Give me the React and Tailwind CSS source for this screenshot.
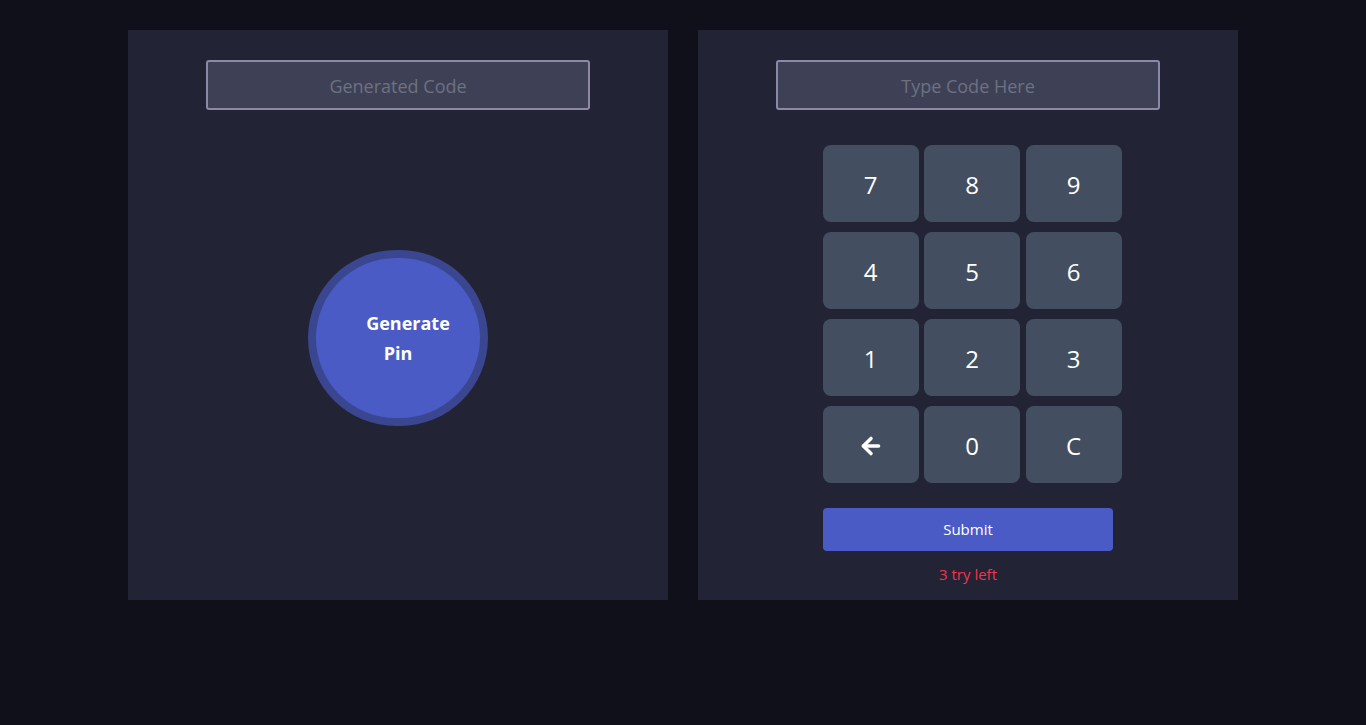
import { ArrowLeft } from 'lucide-react';

const keys = ['7', '8', '9', '4', '5', '6', '1', '2', '3', 'back', '0', 'C'];

export default function App() {
  return (
    <div className="min-h-[725px] w-full bg-[#10101a] pt-[30px] font-['Open_Sans','Noto_Sans',sans-serif]">
      <div className="mx-auto flex w-[1110px] gap-[30px]">
        {/* generator */}
        <div className="flex h-[570px] w-[540px] flex-col items-center bg-[#222335] pt-[30px]">
          <input
            readOnly
            placeholder="Generated Code"
            className="h-[50px] w-[384px] rounded-[3px] border-2 border-[#8b89a6] bg-[#3e4156] pt-[2px] text-center text-[18px] text-white outline-none placeholder:text-[#6d7181]"
          />
          <button className="mt-[140px] flex h-[176px] w-[180px] items-center justify-center rounded-full bg-[#3b4690]">
            <span className="flex h-[160px] w-[164px] flex-col items-center justify-center rounded-full bg-[#4a5bc5] text-[18px] font-bold leading-[30px] text-white">
              <span className="pl-[20px]">Generate</span>
              <span>Pin</span>
            </span>
          </button>
        </div>

        {/* keypad */}
        <div className="flex h-[570px] w-[540px] flex-col items-center bg-[#222335] pt-[30px]">
          <input
            readOnly
            placeholder="Type Code Here"
            className="h-[50px] w-[384px] rounded-[3px] border-2 border-[#8b89a6] bg-[#3e4156] pt-[2px] text-center text-[18px] text-white outline-none placeholder:text-[#6d7181]"
          />
          <div className="ml-[8px] mt-[35px] grid grid-cols-[96px_96px_96px] gap-x-[5.5px] gap-y-[10px]">
            {keys.map((k) => (
              <button
                key={k}
                className="flex h-[77px] items-center justify-center rounded-[8px] bg-[#434f60] pt-[2px] text-[24px] text-white"
              >
                {k === 'back' ? <ArrowLeft className="h-[26px] w-[26px]" strokeWidth={3.2} /> : k}
              </button>
            ))}
          </div>
          <button className="mt-[25px] h-[43px] w-[290px] rounded-[4px] bg-[#4a5bc5] text-[15px] text-white">
            Submit
          </button>
          <p className="mt-[12px] text-[15px] text-[#f0364f]">3 try left</p>
        </div>
      </div>
    </div>
  );
}
